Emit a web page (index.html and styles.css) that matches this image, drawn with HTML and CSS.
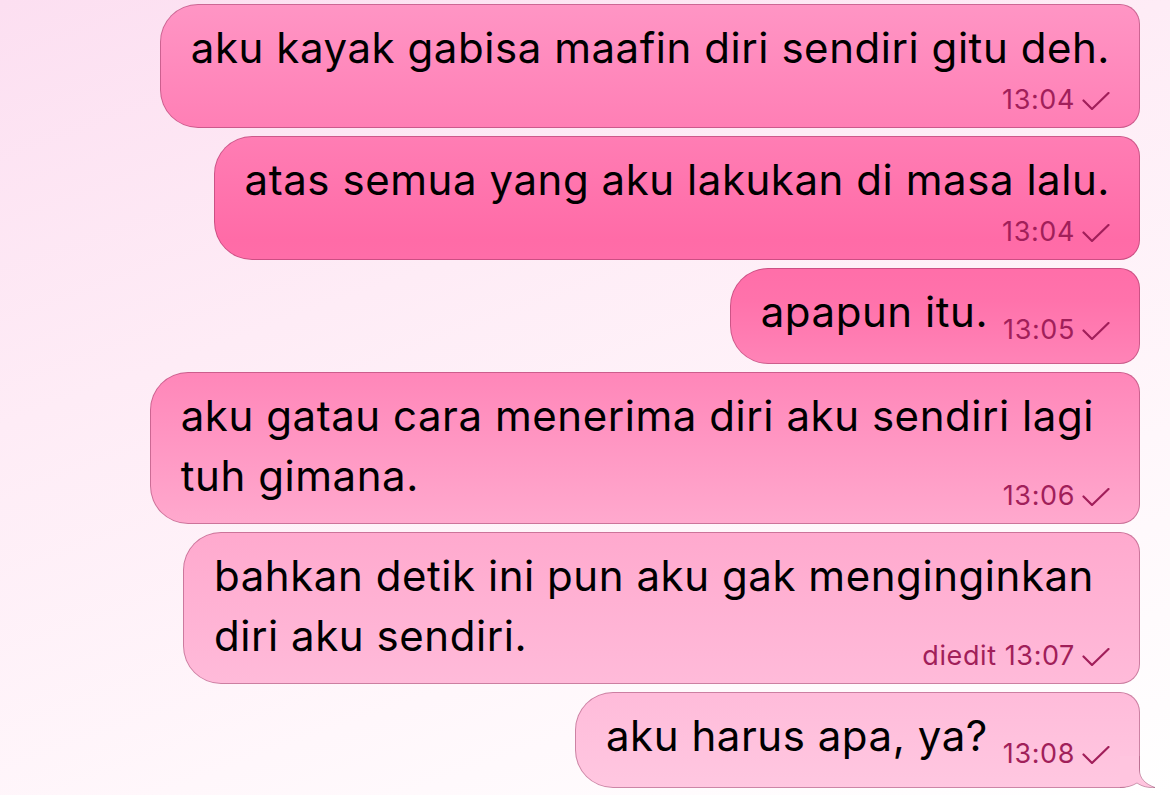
FILE: index.html
```html
<!DOCTYPE html>
<html lang="id">
<head>
<meta charset="utf-8">
<title>Chat</title>
<link rel="stylesheet" href="styles.css">
</head>
<body>
<div class="chat">
  <div class="bubble stacked">
    <div class="text">aku kayak gabisa maafin diri sendiri gitu deh.</div>
    <div class="meta-row"><span class="meta">13:04<svg class="check" viewBox="0 0 28 18" width="28" height="18"><path d="M1.5 8.5 L10 17 L26.5 1"/></svg></span></div>
  </div>
  <div class="bubble stacked">
    <div class="text">atas semua yang aku lakukan di masa lalu.</div>
    <div class="meta-row"><span class="meta">13:04<svg class="check" viewBox="0 0 28 18" width="28" height="18"><path d="M1.5 8.5 L10 17 L26.5 1"/></svg></span></div>
  </div>
  <div class="bubble inline">
    <div class="text">apapun itu.</div>
    <span class="meta">13:05<svg class="check" viewBox="0 0 28 18" width="28" height="18"><path d="M1.5 8.5 L10 17 L26.5 1"/></svg></span>
  </div>
  <div class="bubble multi">
    <div class="text">aku gatau cara menerima diri aku sendiri lagi<br>tuh gimana.</div>
    <span class="meta">13:06<svg class="check" viewBox="0 0 28 18" width="28" height="18"><path d="M1.5 8.5 L10 17 L26.5 1"/></svg></span>
  </div>
  <div class="bubble multi">
    <div class="text">bahkan detik ini pun aku gak menginginkan<br>diri aku sendiri.</div>
    <span class="meta">diedit 13:07<svg class="check" viewBox="0 0 28 18" width="28" height="18"><path d="M1.5 8.5 L10 17 L26.5 1"/></svg></span>
  </div>
  <div class="bubble inline last">
    <div class="text">aku harus apa, ya?</div>
    <span class="meta">13:08<svg class="check" viewBox="0 0 28 18" width="28" height="18"><path d="M1.5 8.5 L10 17 L26.5 1"/></svg></span>
    <svg class="tail" viewBox="0 0 36 32" width="36" height="32">
      <path class="tail-fill" d="M19.5 0 L19.5 14 C19.5 22 25 28 35 31.5 C28 32 22 30.5 17 27 C12 30 7 31.5 0 31.5 L0 0 Z"/>
      <path class="tail-line" d="M19.5 0 L19.5 14 C19.5 22 25 28 35 31.5 C28 32 22 30.5 17 27 C12 30 7 31.5 0 31.5"/>
    </svg>
  </div>
</div>
</body>
</html>
```

FILE: styles.css
```css
html, body {
  margin: 0;
  padding: 0;
}

body {
  width: 1170px;
  height: 795px;
  overflow: hidden;
  font-family: Inter, "Noto Sans", "Liberation Sans", sans-serif;
  background: linear-gradient(160deg, #fcdff1 0%, #feecf6 35%, #fff7fb 70%, #ffffff 100%);
}

.chat {
  display: flex;
  flex-direction: column;
  align-items: flex-end;
  gap: 8px;
  padding: 4px 30px 0 0;
}

.bubble {
  position: relative;
  border: 1px solid rgba(120, 30, 70, 0.38);
  border-radius: 38px 20px 20px 38px;
  background: linear-gradient(180deg,
      #ff96c5 0px,
      #ff80b6 120px,
      #ff6ba7 240px,
      #ff72ab 300px,
      #ff88ba 380px,
      #ffa8cd 520px,
      #ffbad9 680px,
      #ffc8e1 795px) fixed;
  padding: 13px 29px 12px 30px;
  color: #000;
  font-size: 42px;
  letter-spacing: 0.55px;
  line-height: 60px;
}

.text {
  white-space: nowrap;
}

.meta {
  display: inline-block;
  font-size: 27px;
  letter-spacing: 0.6px;
  line-height: 30px;
  color: #a11f5a;
  white-space: nowrap;
}

.check {
  margin-left: 7px;
  vertical-align: -1px;
  fill: none;
  stroke: #a11f5a;
  stroke-width: 2.2;
  stroke-linecap: round;
  stroke-linejoin: round;
}

.meta-row {
  display: flex;
  justify-content: flex-end;
  margin-top: 7px;
  height: 30px;
}

.inline {
  display: flex;
  align-items: flex-start;
  padding-bottom: 18px;
}

.inline .meta {
  margin: 33px 0 0 15px;
}

.multi {
  display: grid;
  padding-bottom: 17px;
}

.multi > .text,
.multi > .meta {
  grid-area: 1 / 1;
}

.multi .text {
  padding-right: 16px;
}

.multi .meta {
  justify-self: end;
  align-self: end;
  margin-bottom: -5px;
}

.tail {
  position: absolute;
  right: -17px;
  bottom: -1px;
}

.tail-fill {
  fill: #ffc5df;
}

.tail-line {
  fill: none;
  stroke: rgba(120, 30, 70, 0.38);
  stroke-width: 1;
}
```
